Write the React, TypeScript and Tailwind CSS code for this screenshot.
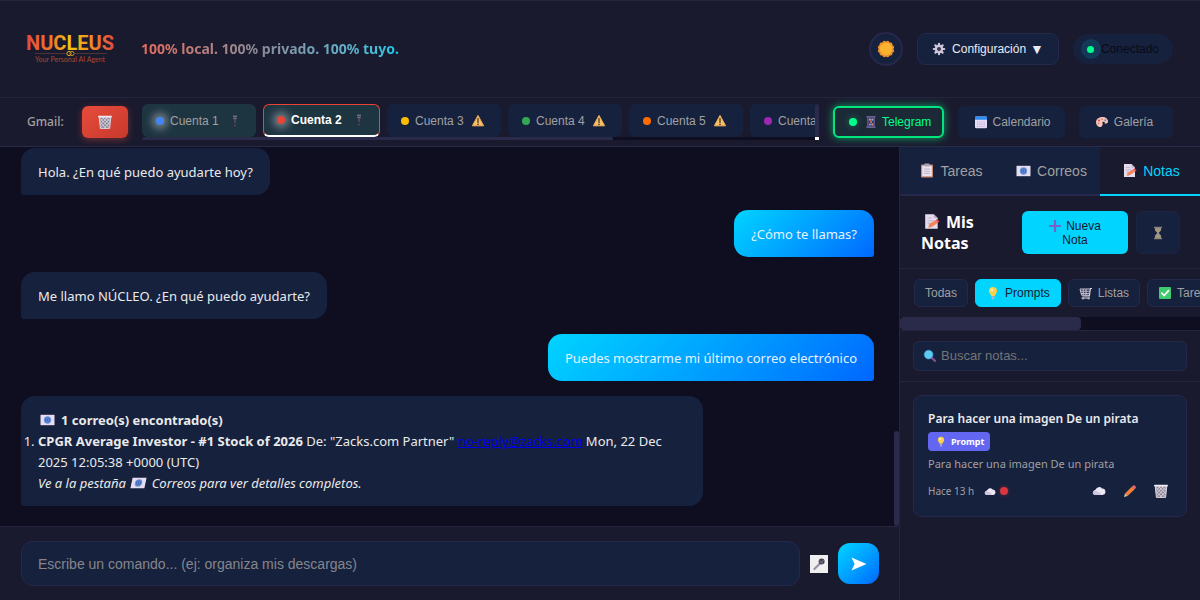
import { useState } from "react";
import type { ReactNode } from "react";
import clsx from "clsx";

type IconProps = { className?: string };

const Logo = () => (
  <svg viewBox="0 0 88 34" className="w-[88px] h-[34px] shrink-0 overflow-visible" role="img" aria-label="Nucleus, Your Personal AI Agent">
    <defs>
      <linearGradient id="word" x1="0" x2="1" y1="0" y2="0">
        <stop offset="0" stopColor="#e2493f" />
        <stop offset="0.3" stopColor="#ee7a26" />
        <stop offset="0.5" stopColor="#f5c60f" />
        <stop offset="0.75" stopColor="#f08a24" />
        <stop offset="1" stopColor="#e2493f" />
      </linearGradient>
    </defs>
    <text x="43" y="18" textAnchor="middle" fontFamily="Roboto, sans-serif" fontWeight="700" fontSize="20" fill="url(#word)">NUCLEUS</text>
    <path d="M8 21.5h31M48 21.5h32" stroke="#6b4a3c" strokeWidth="0.6" />
    <circle cx="42" cy="21.5" r="2.1" fill="#1a1a2e" stroke="#e0b020" />
    <circle cx="45" cy="21.5" r="2.1" fill="none" stroke="#c98a20" />
    <text x="43" y="30" textAnchor="middle" fontFamily="Lato, sans-serif" fontSize="7" fill="#a8492f">Your Personal AI Agent</text>
  </svg>
);

const SunIcon = ({ className }: IconProps) => (
  <svg viewBox="0 0 18 18" className={className} aria-hidden="true">
    <g fill="#e8912d">
      <rect x="2.6" y="2.6" width="12.8" height="12.8" rx="1.6" />
      <rect x="2.6" y="2.6" width="12.8" height="12.8" rx="1.6" transform="rotate(30 9 9)" />
      <rect x="2.6" y="2.6" width="12.8" height="12.8" rx="1.6" transform="rotate(60 9 9)" />
    </g>
    <circle cx="9" cy="9" r="6.2" fill="#fbb32f" />
  </svg>
);

const GearIcon = ({ className }: IconProps) => (
  <svg viewBox="0 0 14 14" className={className} aria-hidden="true">
    <path d="M7 1.8v10.4M1.8 7h10.4M3.4 3.4l7.2 7.2M10.6 3.4l-7.2 7.2" stroke="#cfc8dc" strokeWidth="2.2" strokeLinecap="round" />
    <circle cx="7" cy="7" r="4.2" fill="#cfc8dc" />
    <circle cx="7" cy="7" r="2" fill="#3b3450" />
  </svg>
);

const TrashIcon = ({ className }: IconProps) => (
  <svg viewBox="0 0 14 14" className={className} aria-hidden="true">
    <path d="M1.2 2h11.6l-1.2 11.4H2.4z" fill="#8d8795" stroke="#dcd6e2" />
    <path d="M2 3.5l9.2 9M4.6 2.5l7.2 7M7.8 2.5l4.3 4M2.2 7.5l5.6 5.5M12 3.5l-9.2 9M9.4 2.5L2.2 9.5M6.2 2.5L2 6.5M11.8 7.5l-5.6 5.5" stroke="#e6e0ec" strokeWidth="0.8" />
    <path d="M0.8 1.6h12.4" stroke="#efe9f4" strokeWidth="1.6" strokeLinecap="round" />
  </svg>
);

const WarningIcon = ({ className }: IconProps) => (
  <svg viewBox="0 0 14 13" className={className} aria-hidden="true">
    <path d="M7 1.4l5.6 10.4H1.4z" fill="#f9c166" stroke="#f4ae5a" strokeLinejoin="round" />
    <path d="M7 4.6v3.8" stroke="#4a3628" strokeWidth="1.3" strokeLinecap="round" />
    <circle cx="7" cy="10.4" r="0.8" fill="#4a3628" />
  </svg>
);

const PinIcon = ({ className }: IconProps) => (
  <svg viewBox="0 0 6 14" className={className} aria-hidden="true">
    <path d="M1 2.2h4M1.2 4.4h3.6" stroke="#70697a" strokeWidth="1.6" />
    <path d="M3 5v4" stroke="#6b4a5c" strokeWidth="1.4" />
    <path d="M3 10.4v2" stroke="#7a3f50" strokeWidth="1.4" />
  </svg>
);

const PhoneIcon = ({ className }: IconProps) => (
  <svg viewBox="0 0 10 14" className={className} aria-hidden="true">
    <path d="M0.5 1.8h9M0.5 12.2h9" stroke="#6a6090" strokeWidth="1.8" />
    <rect x="1" y="2" width="8" height="10" fill="#5d5288" />
    <rect x="2.6" y="3.4" width="4.8" height="7.2" fill="#3b3260" />
    <rect x="3" y="3.8" width="1.8" height="1.8" fill="#e9a05b" />
    <rect x="5.4" y="3.8" width="1.8" height="1.8" fill="#6ec3e8" />
    <rect x="4.2" y="6.1" width="1.8" height="1.8" fill="#e86a5b" />
    <rect x="3" y="8.5" width="1.8" height="1.8" fill="#7f9bf0" />
    <rect x="5.4" y="8.5" width="1.8" height="1.8" fill="#e9a05b" />
  </svg>
);

const CalendarIcon = ({ className }: IconProps) => (
  <svg viewBox="0 0 14 14" className={className} aria-hidden="true">
    <rect x="1" y="1.4" width="12" height="11.8" rx="1.2" fill="#e7def5" />
    <path d="M1 4.8V2.6a1.2 1.2 0 0 1 1.2-1.2h9.6A1.2 1.2 0 0 1 13 2.6v2.2z" fill="#2f8df0" />
    <path d="M3 7h8M3 9.2h8M3 11.4h8" stroke="#b9addc" strokeWidth="1.2" strokeDasharray="1.2 1" />
  </svg>
);

const PaletteIcon = ({ className }: IconProps) => (
  <svg viewBox="0 0 14 14" className={className} aria-hidden="true">
    <path d="M7.4 2C3.6 2 1 4.3 1 7.2 1 10.2 3.2 12 5.4 12c2 0 1.4-2.4 3-3 1.6-.6 4.6.2 4.6-2.4C13 3.8 10.6 2 7.4 2z" fill="#f6c3b8" />
    <circle cx="4" cy="5.6" r="1" fill="#e2483f" />
    <circle cx="7" cy="4.2" r="1" fill="#e08a7a" />
    <circle cx="10.2" cy="5.2" r="1" fill="#5a8de0" />
    <circle cx="3.6" cy="8.6" r="1" fill="#d98a90" />
    <circle cx="8.6" cy="8" r="1.2" fill="#1a1a2e" />
  </svg>
);

const ClipboardIcon = ({ className }: IconProps) => (
  <svg viewBox="0 0 14 15" className={className} aria-hidden="true">
    <rect x="1" y="1.4" width="12" height="13" rx="1" fill="#c98c72" />
    <rect x="2.2" y="2.8" width="9.6" height="10.4" fill="#e9e3ef" />
    <rect x="4.4" y="0.6" width="5.2" height="2.8" rx="0.8" fill="#a9a2b4" />
    <path d="M4 6h6M4 8.2h6M4 10.4h6" stroke="#b7afc8" strokeWidth="0.9" />
  </svg>
);

const MailIcon = ({ className }: IconProps) => (
  <svg viewBox="0 0 15 12" className={className} aria-hidden="true">
    <rect x="0.5" y="0.8" width="14" height="10.4" fill="#e6ddf0" />
    <circle cx="7.5" cy="6" r="3.7" fill="#6c97e0" />
    <circle cx="7.5" cy="6" r="2.2" fill="none" stroke="#3a62ae" strokeWidth="0.9" />
    <circle cx="7.5" cy="6" r="0.9" fill="#3a62ae" />
  </svg>
);

const MemoIcon = ({ className }: IconProps) => (
  <svg viewBox="0 0 14 15" className={className} aria-hidden="true">
    <path d="M1 1h7.500L12 4.500V14H1z" fill="#e5dced" />
    <path d="M8.500 1v3.500H12z" fill="#b7adc4" />
    <path d="M3 4.500h4M3 6.800h5.500M3 9h3" stroke="#bcb2ca" strokeWidth="0.9" />
    <path d="M3.600 12.800l1-3 5.600-3.600 2 2.400-5.800 4z" fill="#f4855a" />
    <path d="M10.200 6.200l1.400-1 2 2.400-1.400 1z" fill="#e2485a" />
  </svg>
);

const PlusIcon = ({ className }: IconProps) => (
  <svg viewBox="0 0 12 12" className={className} aria-hidden="true">
    <path d="M6 1v10M1 6h10" stroke="#7a5fc8" strokeWidth="2.2" strokeLinecap="round" />
  </svg>
);

const HourglassIcon = ({ className }: IconProps) => (
  <svg viewBox="0 0 10 14" className={className} aria-hidden="true">
    <path d="M2 2h6v2.500L5.700 7 8 9.500V12H2V9.500L4.300 7 2 4.500z" fill="#9b958f" />
    <path d="M3 3.800h4L5 6.200zM3 11.400L5 9.200l2 2.200z" fill="#b5a04c" />
    <path d="M1 1.500h8M1 12.500h8" stroke="#8c8378" strokeWidth="1.4" />
  </svg>
);

const BulbIcon = ({ className }: IconProps) => (
  <svg viewBox="0 0 10 14" className={className} aria-hidden="true">
    <path d="M5 1a4 4 0 0 0-4 4c0 2.200 1.800 2.900 2.200 5h3.600C7.200 7.900 9 7.200 9 5a4 4 0 0 0-4-4z" fill="#fbd04a" />
    <circle cx="3.9" cy="4" r="1.3" fill="#fff0b0" />
    <path d="M3.400 11h3.200M3.900 12.600h2.200" stroke="#b9b2c6" strokeWidth="1.3" />
  </svg>
);

const CartIcon = ({ className }: IconProps) => (
  <svg viewBox="0 0 14 13" className={className} aria-hidden="true">
    <path d="M13 1.500h-1.600l-1 7.500H3.500" fill="none" stroke="#d8d1e0" strokeWidth="1.2" />
    <path d="M1 2h10.200M1.400 4.200h9.400M2 6.400h8.600M1 2l1.600 6.200h7.800M4.200 2v6M7 2v6" fill="none" stroke="#cbc4d4" />
    <path d="M2.500 11h8.500" stroke="#cbc4d4" strokeWidth="1.2" />
    <circle cx="4" cy="11.4" r="1" fill="#bdb6c8" />
    <circle cx="9.5" cy="11.4" r="1" fill="#bdb6c8" />
  </svg>
);

const CheckIcon = ({ className }: IconProps) => (
  <svg viewBox="0 0 14 14" className={className} aria-hidden="true">
    <rect x="1" y="1" width="12" height="12" rx="1" fill="#3fcb6e" />
    <path d="M3.800 7.200l2.400 2.400 4.300-5" fill="none" stroke="#fff" strokeWidth="1.7" strokeLinecap="round" />
  </svg>
);

const SearchIcon = ({ className }: IconProps) => (
  <svg viewBox="0 0 14 14" className={className} aria-hidden="true">
    <path d="M9 9l3 3" stroke="#8c4a86" strokeWidth="2.4" strokeLinecap="round" />
    <circle cx="5.6" cy="5.6" r="4.4" fill="#5ccbf4" stroke="#3f9bcc" strokeWidth="0.6" />
  </svg>
);

const CloudIcon = ({ className }: IconProps) => (
  <svg viewBox="0 0 14 10" className={className} aria-hidden="true">
    <path d="M4 9a2.800 2.800 0 0 1-.3-5.500A3.600 3.600 0 0 1 10 2.600 3.200 3.200 0 0 1 10.400 9z" fill="#ece7f4" />
    <path d="M3 9a2.300 2.300 0 0 1 0-4.600c2 0 2.800 2 5 2.200L9 9z" fill="#cdc6dc" />
  </svg>
);

const PencilIcon = ({ className }: IconProps) => (
  <svg viewBox="0 0 14 14" className={className} aria-hidden="true">
    <path d="M1 13l1-3.600 2.600 2.600z" fill="#e9c9a8" />
    <path d="M2 9.400L9 2.600l2.600 2.600-7 6.800z" fill="#f2803c" />
    <path d="M9 2.600l1.300-1.200c.9-.7 3.300 1.600 2.500 2.500l-1.200 1.300z" fill="#e56a76" />
  </svg>
);

const MicIcon = ({ className }: IconProps) => (
  <svg viewBox="0 0 14 14" className={className} aria-hidden="true">
    <path d="M2.400 12L8 6.500" stroke="#9a8fa8" strokeWidth="2.2" strokeLinecap="round" />
    <circle cx="9.6" cy="4.4" r="3" fill="#4a4252" />
    <path d="M7.600 3.400l3.600 3.600M8.600 6l3-3" stroke="#8f8799" strokeWidth="0.7" />
  </svg>
);

const SendIcon = ({ className }: IconProps) => (
  <svg viewBox="0 0 16 14" className={className} aria-hidden="true">
    <path d="M0.500 0.500L15.500 7 0.500 13.500 3.600 7z" fill="#fff" />
  </svg>
);

const accounts = [
  { name: "Cuenta 1", dot: "bg-[#4285f4]", linked: true },
  { name: "Cuenta 2", dot: "bg-[#ea4335]", linked: true },
  { name: "Cuenta 3", dot: "bg-[#fbbc04]", linked: false },
  { name: "Cuenta 4", dot: "bg-[#34a853]", linked: false },
  { name: "Cuenta 5", dot: "bg-[#ff6d01]", linked: false },
  { name: "Cuenta 6", dot: "bg-[#9c27b0]", linked: false },
];

const Header = () => (
  <header className="flex items-center h-[98px] px-[27px] shrink-0 border-y border-[#25253f] bg-[#1a1a2e]">
    <Logo />
    <p className="ml-[26px] text-sm font-bold bg-linear-to-r from-[#e56b5c] via-[#8a8a98] via-45% to-[#0cc8e8] bg-clip-text text-transparent whitespace-nowrap">
      100% local. 100% privado. 100% tuyo.
    </p>
    <div className="ml-auto flex items-center gap-[14px] font-['Liberation_Sans',sans-serif] text-xs">
      <button aria-label="Cambiar tema" className="flex items-center justify-center size-[34px] rounded-full border-2 border-[#25284a] bg-[#16213e]">
        <SunIcon className="size-[18px]" />
      </button>
      <button className="flex items-center gap-1 h-8 px-[14px] rounded-lg border border-[#23294b] bg-[#16213e] text-[#eaeaf2] whitespace-nowrap">
        <GearIcon className="size-[14px] mr-0.5" />
        Configuración <span className="text-sm leading-4">▼</span>
      </button>
      <div className="flex items-center h-[30px] pl-2 pr-[14px] rounded-full bg-[#16213e] text-[#090a14]">
        <span className="flex items-center justify-center size-5 rounded-full bg-[#123a58]">
          <span className="size-[7px] rounded-full bg-[#00ff88]" />
        </span>
        Conectado
      </div>
    </div>
  </header>
);

const AccountBar = () => {
  const [active, setActive] = useState("Cuenta 2");
  return (
    <nav className="flex items-center gap-[14px] h-[49px] px-[27px] shrink-0 border-b border-[#2a2a4a] bg-[#1a1a2e] text-xs text-[#a0a0a0]">
      <span className="w-[41px] font-medium">Gmail:</span>
      <button aria-label="Eliminar" className="flex items-center justify-center w-[46px] h-8 shrink-0 rounded-md bg-linear-to-br from-[#e74c3c] to-[#c8392b] shadow-[0_2px_7px_#e74c3c66]">
        <TrashIcon className="size-[14px]" />
      </button>
      <div className="flex flex-1 min-w-0 h-9 font-['Liberation_Sans',sans-serif]">
        <div className="flex flex-col flex-1 min-w-0">
          <div className="flex gap-[7px] flex-1 min-h-0 overflow-hidden">
            {accounts.map((a) => (
              <button
                key={a.name}
                onClick={() => setActive(a.name)}
                className={clsx(
                  "flex items-center shrink-0 h-full px-[13px] rounded-md whitespace-nowrap border",
                  a.linked ? "bg-[#1d3441]" : "bg-[#16213e]",
                  active === a.name ? "w-[117px] border-[#ea4335] border-b-2 border-b-white text-white font-bold" : "w-[114px] border-transparent"
                )}
              >
                <span className={clsx("size-2 rounded-full shrink-0", a.dot, a.linked && "shadow-[0_0_8px_4px_#ffffff66]")} />
                <span className="ml-[6px]">{a.name}</span>
                {a.linked ? <PinIcon className="ml-auto mr-1 w-[6px] h-[14px]" /> : <WarningIcon className="ml-auto mr-0.5 w-[14px] h-[13px]" />}
              </button>
            ))}
          </div>
          <div className="h-[3px] bg-[#0e0e20]">
            <div className="h-full w-[70%] rounded-sm bg-[#2a2a4a]" />
          </div>
        </div>
        <div className="flex flex-col w-1">
          <div className="flex-1 rounded-sm bg-[#2a2a4a]" />
          <div className="h-[3px] bg-white" />
        </div>
      </div>
      <div className="flex items-center gap-[14px] shrink-0 font-['Liberation_Sans',sans-serif]">
        <button className="flex items-center w-[111px] h-8 px-[14px] rounded-md border-2 border-[#00e67f] bg-[#1c2a38] text-[#00ff88] shadow-[0_0_8px_#00ff8899]">
          <span className="size-2 shrink-0 rounded-full bg-[#00ff88] shadow-[0_0_7px_#00ff8866]" />
          <PhoneIcon className="ml-[9px] mr-[6px] shrink-0 w-[10px] h-[14px]" />
          Telegram
        </button>
        <button className="flex items-center justify-center gap-1 w-[107px] h-8 pl-0.5 rounded-md bg-[#16213e]">
          <CalendarIcon className="size-[14px]" />
          Calendario
        </button>
        <button className="flex items-center justify-center gap-[5px] w-[94px] h-8 pr-1 rounded-md bg-[#16213e]">
          <PaletteIcon className="size-[14px]" />
          Galería
        </button>
      </div>
    </nav>
  );
};

const Message = ({ mine, children }: { mine?: boolean; children: ReactNode }) => (
  <div
    className={clsx(
      "max-w-[80%] shrink-0 px-[17px] pt-[14px] pb-3 rounded-[14px]",
      mine ? "self-end rounded-br-[3px] bg-linear-135 from-[#00d4ff] to-[#0066ff] text-[#e4f2ff]" : "self-start rounded-bl-[3px] bg-[#16213e] text-[#eaeaea]"
    )}
  >
    {children}
  </div>
);

const Chat = () => (
  <main className="flex flex-col flex-1 min-w-0">
    <div className="flex flex-1 min-h-0">
      <div className="flex flex-col justify-end gap-[15px] flex-1 min-w-0 overflow-hidden pr-5 pb-5 pl-[21px] text-[13px] leading-[21px]">
        <Message>Hola. ¿En qué puedo ayudarte hoy?</Message>
        <Message mine>¿Cómo te llamas?</Message>
        <Message>Me llamo NÚCLEO. ¿En qué puedo ayudarte?</Message>
        <Message mine>Puedes mostrarme mi último correo electrónico</Message>
        <Message>
          <p className="font-bold">
            <MailIcon className="inline w-[15px] h-3 ml-0.5 mr-[6px] align-[-1px]" />1 correo(s) encontrado(s)
          </p>
          <ol className="list-decimal list-outside">
            <li>
              <strong>CPGR Average Investor - #1 Stock of 2026</strong> De: "Zacks.com Partner"{" "}
              <a href="mailto:no-reply@zacks.com" className="text-[#0000ee] underline">no-reply@zacks.com</a> Mon, 22 Dec 2025 12:05:38 +0000 (UTC)
            </li>
          </ol>
          <p className="italic">
            Ve a la pestaña <MailIcon className="inline w-[15px] h-3 mx-0.5 align-[-1px] -skew-x-12" /> Correos para ver detalles completos.
          </p>
        </Message>
      </div>
      <div className="flex flex-col justify-end w-[5px]">
        <div className="h-1/4 rounded-sm bg-[#2a2a4a]" />
      </div>
    </div>
    <form className="flex items-center gap-[10px] py-[14px] pl-[21px] pr-5 border-t border-[#25253f] bg-[#1a1a2e]" onSubmit={(e) => e.preventDefault()}>
      <input
        aria-label="Comando"
        placeholder="Escribe un comando... (ej: organiza mis descargas)"
        className="flex-1 min-w-0 h-[45px] px-4 rounded-xl border border-[#23294b] bg-[#16213e] font-['Liberation_Sans',sans-serif] text-sm text-white placeholder:text-[#85868c]"
      />
      <button type="button" aria-label="Grabar voz" className="flex items-center justify-center size-[18px] bg-[#efefef]">
        <MicIcon className="size-[14px]" />
      </button>
      <button aria-label="Enviar" className="flex items-center justify-center size-[41px] rounded-xl bg-linear-135 from-[#00d4ff] to-[#0066ff]">
        <SendIcon className="w-4 h-[14px]" />
      </button>
    </form>
  </main>
);

const tabs = [
  { name: "Tareas", icon: <ClipboardIcon className="w-[14px] h-[15px]" /> },
  { name: "Correos", icon: <MailIcon className="w-[15px] h-3" /> },
  { name: "Notas", icon: <MemoIcon className="w-[14px] h-[15px]" /> },
];

const filters = [
  { name: "Todas", icon: null },
  { name: "Prompts", icon: <BulbIcon className="size-[14px]" /> },
  { name: "Listas", icon: <CartIcon className="w-[14px] h-[13px]" /> },
  { name: "Tareas", icon: <CheckIcon className="size-[14px]" /> },
];

const NotesPanel = () => {
  const [tab, setTab] = useState("Notas");
  const [filter, setFilter] = useState("Prompts");
  return (
    <aside className="flex flex-col w-[301px] shrink-0 overflow-hidden border-l border-[#25253f] bg-[#1a1a2e]">
      <div className="flex h-[49px] shrink-0 font-['Liberation_Sans',sans-serif] text-sm">
        {tabs.map((t) => (
          <button
            key={t.name}
            onClick={() => setTab(t.name)}
            className={clsx(
              "flex flex-1 items-center justify-center gap-[6px] pl-[3px] border-b-2",
              tab === t.name ? "border-[#00d4ff] text-[#00d4ff]" : "border-[#25284a] bg-[#16213e] text-[#a0a0a0]"
            )}
          >
            {t.icon}
            {t.name}
          </button>
        ))}
      </div>

      <div className="flex items-center gap-2 pt-[15px] pb-[14px] pl-[21px] pr-5 border-b border-[#25253f]">
        <h2 className="flex-1 text-base leading-[21px] font-bold text-white">
          <MemoIcon className="inline w-4 h-[17px] ml-[3px] mr-[6px] align-[-2px]" />Mis Notas
        </h2>
        <button className="w-[106px] h-[43px] px-6 rounded-md bg-[#00d4ff] font-['Liberation_Sans',sans-serif] text-xs leading-[14px] text-[#1a1a2e]">
          <PlusIcon className="inline size-3 mr-[5px] align-[-2px]" />Nueva Nota
        </button>
        <button aria-label="Pendientes" className="flex items-center justify-center w-[44px] h-[43px] rounded-md border border-[#1d2442] bg-[#16213e]">
          <HourglassIcon className="w-[10px] h-[14px]" />
        </button>
      </div>

      <div className="border-b border-[#25253f]">
        <div className="flex gap-[7px] pl-[14px] py-[10px] overflow-hidden font-['Liberation_Sans',sans-serif] text-xs">
          {filters.map((f) => (
            <button
              key={f.name}
              onClick={() => setFilter(f.name)}
              className={clsx(
                "flex items-center gap-[5px] shrink-0 h-7 px-[10px] rounded-md border",
                filter === f.name ? "border-[#00d4ff] bg-[#00d4ff] text-[#1a1a2e]" : "border-[#23294b] bg-[#16213e] text-[#a0a0a0]"
              )}
            >
              {f.icon}
              {f.name}
            </button>
          ))}
        </div>
        <div className="h-[13px] bg-[#0e0e20]">
          <div className="h-full w-[181px] rounded-sm bg-[#2a2a4a]" />
        </div>
      </div>

      <div className="px-[13px] py-[10px] border-b border-[#25253f]">
        <label className="flex items-center gap-1 h-[30px] px-[9px] rounded-md border border-[#23294b] bg-[#16213e]">
          <SearchIcon className="size-[14px] shrink-0" />
          <input
            aria-label="Buscar notas"
            placeholder="Buscar notas..."
            className="flex-1 min-w-0 bg-transparent font-['Liberation_Sans',sans-serif] text-[13px] text-white placeholder:text-[#757575]"
          />
        </label>
      </div>

      <div className="p-[13px]">
        <article className="px-[14px] pt-3 pb-[15px] rounded-lg border border-[#23294b] bg-[#16213e] text-[#a0a0a0]">
          <h3 className="text-xs leading-[22px] font-semibold text-[#eaeaea]">Para hacer una imagen De un pirata</h3>
          <span className="flex items-center gap-[5px] w-[62px] h-[19px] mt-0.5 pl-2 rounded-[4px] bg-[#6366f1] text-[9px] font-bold text-white">
            <BulbIcon className="w-[10px] h-[11px]" />
            Prompt
          </span>
          <p className="mt-1 text-[11px] leading-[18px]">Para hacer una imagen De un pirata</p>
          <div className="flex items-center mt-2 h-5 text-[10px]">
            Hace 13 h
            <CloudIcon className="ml-[10px] w-3 h-[9px]" />
            <span className="ml-1 size-2 rounded-full bg-[#d9363e] shadow-[0_0_4px_#d9363e66]" />
            <div className="ml-auto mr-1 flex items-center gap-[17px]">
              <button aria-label="Subir"><CloudIcon className="w-[14px] h-[10px]" /></button>
              <button aria-label="Editar"><PencilIcon className="size-[14px]" /></button>
              <button aria-label="Eliminar nota"><TrashIcon className="size-[14px]" /></button>
            </div>
          </div>
        </article>
      </div>
    </aside>
  );
};

const App = () => (
  <div className="flex flex-col h-screen overflow-hidden bg-[#0e0e20] font-['Noto_Sans','Open_Sans',sans-serif]">
    <Header />
    <AccountBar />
    <div className="flex flex-1 min-h-0">
      <Chat />
      <NotesPanel />
    </div>
  </div>
);

export default App;
